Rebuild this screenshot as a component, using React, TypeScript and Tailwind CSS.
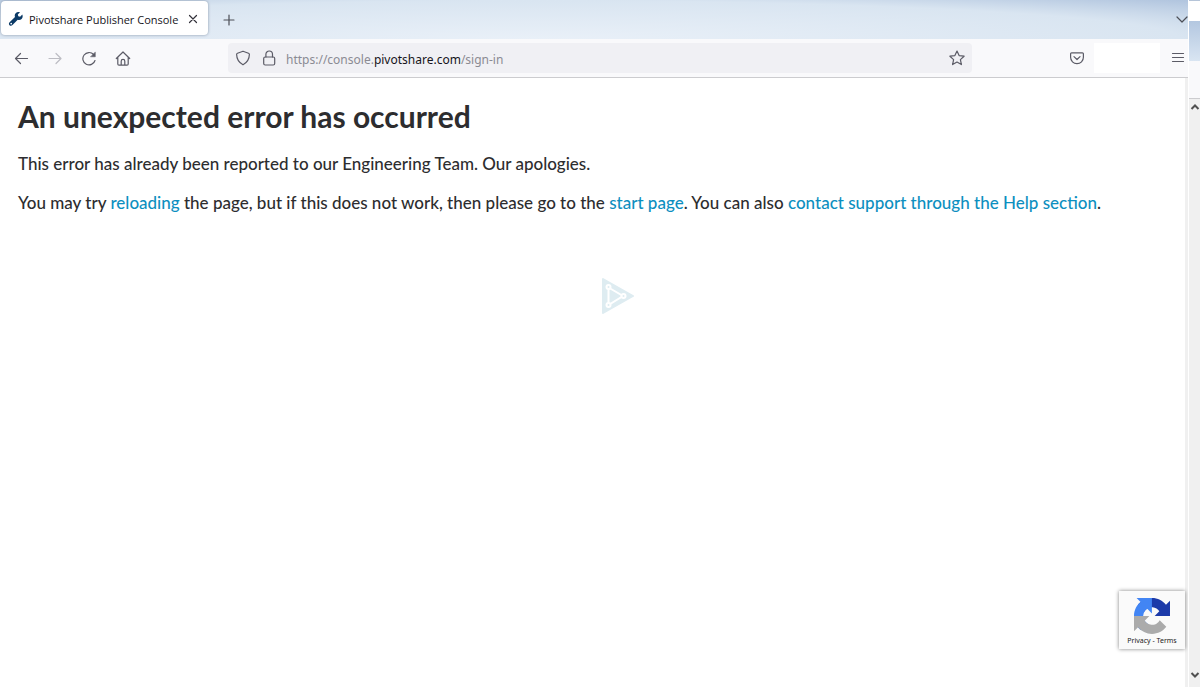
import React from 'react';

interface IconProps {
  className?: string;
  children: React.ReactNode;
}

// All toolbar glyphs share the same 16px grid
const Icon: React.FC<IconProps> = ({ className = 'size-4', children }) => (
  <svg
    className={`shrink-0 ${className}`}
    viewBox="0 0 16 16"
    fill="none"
    stroke="currentColor"
    strokeWidth={1.2}
    strokeLinecap="round"
    strokeLinejoin="round"
    aria-hidden="true"
  >
    {children}
  </svg>
);

const TabStrip = () => (
  <div className="flex h-[39px] items-center bg-[radial-gradient(ellipse_at_45%_100%,#e9f0f8_0%,#d9e5f1_70%,#b0c4de_100%)]">
    <div className="mb-1 ml-px flex h-[34px] w-[207px] items-center rounded-sm bg-white pr-[7px] pl-[7px] shadow-[0_0_3px_#8795a8]">
      <svg className="mr-[5px] size-4 shrink-0" viewBox="0 0 16 16" aria-hidden="true">
        <path
          fill="#0b3a66"
          d="M14.3 4.600l-2.200 2.100-1.800-.5-.5-1.800L12 2.300C10.400 1.700 8.700 2 7.700 3.200c-1 1.100-1.200 2.500-.7 3.800L1.600 12.200c-.9.900-.9 2.200-.1 3s2.100.8 3-.1l5.200-5.300c1.400.4 2.900.2 3.900-.8 1.200-1.200 1.400-2.900.7-4.400zM3.800 14.200a.8.8 0 1 1-1.200-1.200.8.8 0 0 1 1.200 1.200z"
        />
      </svg>
      <span className="flex-1 pt-1 font-['Open_Sans',sans-serif] text-[11px] leading-4 whitespace-nowrap text-[#15141a]">
        Pivotshare Publisher Console
      </span>
      <button type="button" aria-label="Close tab" className="text-[#33323a]">
        <Icon>
          <path d="M4.500 5.500l7 7M11.500 5.500l-7 7" />
        </Icon>
      </button>
    </div>
    <button type="button" aria-label="New tab" className="ml-[13px] text-[#4c4f57]">
      <Icon>
        <path d="M8 3v10M3 8h10" />
      </Icon>
    </button>
    <button type="button" aria-label="List all tabs" className="-mr-0.5 ml-auto text-[#4c4f57]">
      <Icon>
        <path d="M3 5l5 5 5-5" />
      </Icon>
    </button>
  </div>
);

const NavBar = () => (
  <div className="flex h-[39px] items-center border-b border-[#cccccf] bg-[#f9f9fb] text-[#5b5b66]">
    <div className="flex w-[228px] shrink-0 items-center gap-[18px] pl-[13px]">
      <button type="button" aria-label="Back">
        <Icon>
          <path d="M14.500 8.500H2.500M7.500 3.500l-5 5 5 5" />
        </Icon>
      </button>
      <button type="button" aria-label="Forward" disabled className="text-[#bdbdc3]">
        <Icon>
          <path d="M2 8.500h12M9 3.500l5 5-5 5" />
        </Icon>
      </button>
      <button type="button" aria-label="Reload">
        <Icon>
          <path d="M14 10.500A6.200 6.200 0 1 1 12.600 4.500" />
          <path fill="currentColor" d="M14.300 2.300v4.500H9.800z" strokeWidth={0.5} />
        </Icon>
      </button>
      <button type="button" aria-label="Home">
        <Icon>
          <path d="M1.300 8.500L8 2l6.700 6.500M2.800 7.300v6.600c0 .7.500 1.200 1.200 1.200h8c.7 0 1.200-.5 1.200-1.200V7.300M6.200 15v-3.800c0-1 .8-1.800 1.800-1.800s1.800.8 1.800 1.800V15" />
        </Icon>
      </button>
    </div>

    <div className="flex h-[30px] flex-1 items-center rounded-sm bg-[#f0f0f4] px-[7px]">
      <Icon>
        <path d="M8 1.200l5.500 2c.5.200.9.600.9 1.100-.1 4.600-2.200 8.300-6.400 10.500C3.800 12.600 1.700 8.900 1.600 4.300c0-.5.400-.9.900-1.100z" />
      </Icon>
      <Icon className="ml-[10px] size-4">
        <rect x="2.700" y="7" width="11" height="8" rx="1.500" />
        <path d="M4.900 7V4.300a3.300 3.300 0 0 1 6.600 0V7" />
      </Icon>
      <a
        href="https://console.pivotshare.com/sign-in"
        className="ml-[9px] flex-1 pt-1 text-[12px] leading-4 text-[#8b8b93]"
      >
        https://console.<span className="text-[#15141a]">pivotshare.com</span>/sign-in
      </a>
      <button type="button" aria-label="Bookmark this page">
        <Icon>
          <path d="M8 1l2.100 4.600 5 .6-3.700 3.400 1 5L8 12.100l-4.400 2.500 1-5L.9 6.200l5-.6z" />
        </Icon>
      </button>
    </div>

    <div className="flex w-[216px] shrink-0 items-center justify-end">
      <button type="button" aria-label="Save to Pocket">
        <Icon>
          <path d="M2.600 2.800h10.800c.6 0 1 .4 1 1v3.500a6.400 6.400 0 0 1-12.800 0V3.800c0-.6.400-1 1-1z" />
          <path d="M5 6.600l3 2.900 3-2.900" />
        </Icon>
      </button>
      <div className="ml-[9px] h-[30px] w-[66px] bg-white" />
      <button type="button" aria-label="Open application menu" className="mr-[2px] ml-[10px]">
        <Icon>
          <path d="M2.500 3.500h11M2.500 7.500h11M2.500 11.500h11" />
        </Icon>
      </button>
    </div>
  </div>
);

const RecaptchaBadge = () => (
  <div className="absolute right-0 bottom-[38px] flex w-[66px] flex-col items-center bg-[#fafafa] pt-[7px] pb-0.5 font-['Noto_Sans',sans-serif] shadow-[0_0_4px_#808080]">
    <svg className="size-9" viewBox="0 0 64 64" aria-hidden="true">
      <path
        fill="#1c3aa9"
        d="M64 31.955l-.033-1.370V4.687l-7.160 7.160C50.948 4.674 42.033.093 32.050.093c-10.400 0-19.622 4.960-25.458 12.640l11.736 11.860a15.550 15.550 0 0 1 4.754-5.334c2.050-1.600 4.952-2.906 8.968-2.906.485 0 .860.057 1.135.163 4.976.393 9.288 3.140 11.828 7.124l-8.307 8.307L64 31.953"
      />
      <path
        fill="#4285f4"
        d="M31.862.094l-1.370.033H4.594l7.160 7.160C4.580 13.147 0 22.060 0 32.046c0 10.400 4.960 19.622 12.640 25.458L24.500 45.768a15.550 15.550 0 0 1-5.334-4.754c-1.600-2.050-2.906-4.952-2.906-8.968 0-.485.057-.860.163-1.135.393-4.976 3.140-9.288 7.124-11.828l8.307 8.307L31.860.095"
      />
      <path
        fill="#ababab"
        d="M.001 32.045l.033 1.370v25.898l7.160-7.160c5.860 7.173 14.774 11.754 24.760 11.754 10.400 0 19.622-4.960 25.458-12.640l-11.736-11.860a15.550 15.550 0 0 1-4.754 5.334c-2.050 1.600-4.952 2.906-8.968 2.906-.485 0-.860-.057-1.135-.163-4.976-.393-9.288-3.140-11.828-7.124l8.307-8.307c-10.522.040-22.400.066-27.295-.005"
      />
    </svg>
    <div className="mt-px text-[7px] leading-3 whitespace-nowrap text-[#222]">
      <a href="#privacy">Privacy</a> - <a href="#terms">Terms</a>
    </div>
  </div>
);

const ErrorPage = () => (
  <main className="relative flex-1 border-r-[3px] border-[#f0f0f0] bg-white px-[18px] pt-5 font-['Lato',sans-serif] text-[#2d2d2f]">
    <h1 className="text-[30px] leading-9 font-bold">An unexpected error has occurred</h1>
    <p className="mt-[18px] text-[17px] leading-6 font-medium">
      This error has already been reported to our Engineering Team. Our apologies.
    </p>
    <p className="mt-[15px] text-[17px] leading-6 font-medium">
      You may try{' '}
      <a href="#reload" className="text-[#0d8fc0]">reloading</a>{' '}
      the page, but if this does not work, then please go to the{' '}
      <a href="#start" className="text-[#0d8fc0]">start page</a>. You can also{' '}
      <a href="#help" className="text-[#0d8fc0]">contact support through the Help section</a>.
    </p>
    <div className="mt-[63px] flex justify-center pl-[50px]">
      <svg className="h-9 w-8" viewBox="0 0 32 36" aria-hidden="true">
        <path fill="#deecf1" stroke="#deecf1" strokeWidth={2} strokeLinejoin="round" d="M1 1l30 17L1 35z" />
        <path fill="none" stroke="#fff" strokeWidth={2} d="M6.500 9.500L21 18 6.500 27z" />
        <g fill="#deecf1" stroke="#fff" strokeWidth={2}>
          <circle cx="6.500" cy="9" r="2" />
          <circle cx="21.500" cy="18" r="2" />
          <circle cx="6.500" cy="27" r="2" />
        </g>
      </svg>
    </div>
    <RecaptchaBadge />
  </main>
);

// Sliver of the outer window's frame and scrollbar
const WindowEdge = () => (
  <div className="flex w-3 shrink-0 flex-col border-l border-white bg-[#f0f0f0]">
    <div className="h-[21px] border-t border-[#b5c4d8] bg-white" />
    <div className="h-10 bg-linear-to-b from-[#b3c7e0] to-[#d9e5f2]" />
    <div className="h-[38px] border-b border-[#cccccf] bg-[#f9f9fb]" />
    <button type="button" aria-label="Scroll up" className="flex h-4 items-center justify-center text-[#505050]">
      <svg className="h-2 w-[10px]" viewBox="0 0 10 8" fill="none" stroke="currentColor" strokeWidth={2} aria-hidden="true">
        <path d="M1.500 6L5 2.500 8.500 6" />
      </svg>
    </button>
    <button type="button" aria-label="Scroll down" className="mt-auto mb-1 flex h-4 items-center justify-center text-[#505050]">
      <svg className="h-2 w-[10px]" viewBox="0 0 10 8" fill="none" stroke="currentColor" strokeWidth={2} aria-hidden="true">
        <path d="M1.500 2L5 5.500 8.500 2" />
      </svg>
    </button>
  </div>
);

const App: React.FC = () => (
  <div className="flex min-h-screen bg-white font-['Noto_Sans',sans-serif]">
    <div className="flex min-w-0 flex-1 flex-col overflow-hidden">
      <TabStrip />
      <NavBar />
      <ErrorPage />
    </div>
    <WindowEdge />
  </div>
);

export default App;
